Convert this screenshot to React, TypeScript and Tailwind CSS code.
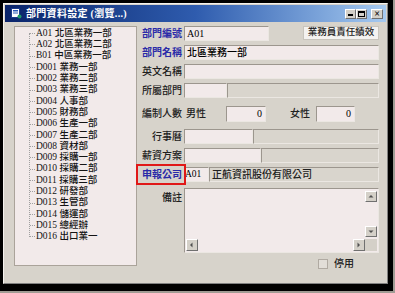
import React from 'react';

const TREE = [
  'A01 北區業務一部',
  'A02 北區業務二部',
  'B01 中區業務一部',
  'D001 業務一部',
  'D002 業務二部',
  'D003 業務三部',
  'D004 人事部',
  'D005 財務部',
  'D006 生產一部',
  'D007 生產二部',
  'D008 資材部',
  'D009 採購一部',
  'D010 採購二部',
  'D011 採購三部',
  'D012 研發部',
  'D013 生管部',
  'D014 儲運部',
  'D015 總經辦',
  'D016 出口業一',
];

const FONT = { fontFamily: '"Liberation Serif", "Noto Sans CJK TC", serif' };

const sunken = 'border border-t-[#9c968e] border-l-[#9c968e] border-b-[#ebe7e2] border-r-[#ebe7e2]';
const edit = `${sunken} bg-[#f2eaea]`;
const readonly = `${sunken} bg-[#d9d5cd]`;
const raised = 'border border-t-white border-l-white border-b-[#707070] border-r-[#707070] bg-[#d4d0c8]';

const Label = ({ children, blue }: { children: React.ReactNode; blue?: boolean }) => (
  <div className={`w-[47px] shrink-0 pr-[2px] text-right text-[10px] leading-[15px] ${blue ? 'text-[#2a2aa8] font-bold' : 'text-[#202020] font-medium'}`}>
    {children}
  </div>
);

const TitleIcon = () => (
  <svg width="11" height="11" viewBox="0 0 11 11">
    <rect x="0.5" y="0.5" width="8" height="9" fill="#fff" stroke="#1a3a8a" />
    <rect x="2" y="2" width="5" height="1.5" fill="#2a5ab8" />
    <rect x="2" y="4.5" width="5" height="1" fill="#2a5ab8" />
    <circle cx="8.5" cy="8.5" r="2" fill="#1e9a6a" />
  </svg>
);

const Arrow = ({ dir }: { dir: 'up' | 'down' | 'left' | 'right' }) => {
  const pts = {
    up: '1.5,4.5 4,2 6.5,4.5',
    down: '1.5,2.5 4,5 6.5,2.5',
    left: '4.5,1.5 2,4 4.5,6.5',
    right: '2.5,1.5 5,4 2.5,6.5',
  }[dir];
  return (
    <svg width="8" height="8" viewBox="0 0 8 8">
      <polygon points={pts} fill="#505050" />
    </svg>
  );
};

export default function App() {
  return (
    <div className="w-[395px] h-[293px] bg-[#a09c94] overflow-hidden" style={FONT}>
      <div className="w-[393px] h-[291px] bg-black pl-[3px] pt-[3px] pr-[5px] pb-[7px]">
        <div className="w-full h-full bg-[#d7d3cb] border border-t-[#f4f2ee] border-l-[#f4f2ee] border-b-[#808080] border-r-[#808080] p-[1px] flex flex-col">
          {/* title bar */}
          <div className="h-[17px] shrink-0 flex items-center bg-gradient-to-r from-[#0a246a] via-[#2f5cae] to-[#a6caf0] pl-[6px] pr-[3px]">
            <TitleIcon />
            <span className="ml-[4px] text-white font-bold text-[10px] leading-none tracking-[0.3px]">部門資料設定 (瀏覽...)</span>
            <div className="ml-auto flex items-center">
              <div className={`${raised} w-[11px] h-[10px] flex items-end justify-center pb-[2px]`}>
                <div className="w-[5px] h-[2px] bg-black" />
              </div>
              <div className={`${raised} w-[11px] h-[10px] flex items-center justify-center`}>
                <div className="w-[7px] h-[6px] border border-t-2 border-black" />
              </div>
              <div className={`${raised} ml-[4px] w-[12px] h-[10px] flex items-center justify-center text-[10px] font-bold leading-none text-black`}>
                ×
              </div>
            </div>
          </div>

          {/* body */}
          <div className="flex flex-1 pl-[9px] pt-[4px]">
            {/* tree */}
            <div className="w-[123px] h-[240px] shrink-0 bg-[#f2eaea] border border-[#aaa39a] pt-[1px] relative">
              <div className="absolute left-[14px] top-[6px] h-[204px] border-l border-dotted border-[#a0a0a0]" />
              {TREE.map((t) => (
                <div key={t} className="flex items-center h-[11.3px]">
                  <div className="ml-[15px] w-[5px] border-t border-dotted border-[#a0a0a0]" />
                  <span className="ml-[1px] text-[9.5px] leading-none whitespace-nowrap font-medium text-[#141414]">{t}</span>
                </div>
              ))}
            </div>

            {/* form */}
            <div className="flex flex-col gap-[4px] w-[242px]">
              <div className="flex h-[15px]">
                <Label blue>部門編號</Label>
                <div className={`${edit} w-[85px] h-[15px] pl-[2px] text-[10px] leading-[13px]`}>A01</div>
                <div className="ml-auto w-[76px] h-[14px] bg-[#f4f2f0] border border-[#c8c4bc] flex items-center justify-center text-[9.5px] leading-none font-medium text-[#202020]">
                  業務員責任績效
                </div>
              </div>
              <div className="flex h-[15px]">
                <Label blue>部門名稱</Label>
                <div className={`${edit} flex-1 h-[15px] pl-[2px] text-[10px] leading-[13px] font-medium`}>北區業務一部</div>
              </div>
              <div className="flex h-[15px]">
                <Label>英文名稱</Label>
                <div className={`${edit} flex-1 h-[15px]`} />
              </div>
              <div className="flex h-[15px]">
                <Label>所屬部門</Label>
                <div className={`${edit} w-[43px] h-[15px]`} />
                <div className={`${readonly} flex-1 h-[15px]`} />
              </div>
              <div className="flex h-[23px] items-center">
                <Label>編制人數</Label>
                <div className="flex-1 h-[23px] flex items-center">
                  <span className="ml-[2px] w-[40px] text-[10px] leading-none font-medium text-[#202020]">男性</span>
                  <div className={`${edit} w-[40px] h-[16px] pr-[3px] text-right text-[10px] leading-[14px]`}>0</div>
                  <span className="ml-[24px] w-[26px] text-[10px] leading-none font-medium text-[#202020]">女性</span>
                  <div className={`${edit} w-[39px] h-[16px] pr-[3px] text-right text-[10px] leading-[14px]`}>0</div>
                </div>
              </div>
              <div className="flex h-[15px]">
                <Label>行事曆</Label>
                <div className={`${edit} w-[69px] h-[15px]`} />
                <div className={`${readonly} flex-1 h-[15px]`} />
              </div>
              <div className="flex h-[15px]">
                <Label>薪資方案</Label>
                <div className={`${edit} w-[77px] h-[15px]`} />
                <div className={`${readonly} flex-1 h-[15px]`} />
              </div>
              <div className="flex h-[15px] relative">
                <Label blue>申報公司</Label>
                <div className="absolute left-[-1px] top-[-3px] w-[50px] h-[21px] border-[2.5px] border-[#e01818]" />
                <div className={`${edit} w-[25px] h-[15px] text-[9.5px] leading-[13px] overflow-hidden`}>A01</div>
                <div className={`${readonly} flex-1 h-[15px] pl-[2px] text-[10px] leading-[13px] font-medium text-[#202020]`}>正航資訊股份有限公司</div>
              </div>
              <div className="flex h-[65px] mt-[2px]">
                <Label>
                  <span className="block mt-[2px]">備註</span>
                </Label>
                <div className={`${edit} flex-1 h-[65px] relative`}>
                  <div className="absolute right-[1px] top-[2px] w-[12px] h-[46px] flex flex-col justify-between">
                    <div className={`${raised} h-[11px] flex items-center justify-center`}>
                      <Arrow dir="up" />
                    </div>
                    <div className={`${raised} h-[11px] flex items-center justify-center`}>
                      <Arrow dir="down" />
                    </div>
                  </div>
                  <div className="absolute left-[1px] right-[1px] bottom-[1px] h-[12px] flex">
                    <div className={`${raised} w-[12px] h-[12px] flex items-center justify-center`}>
                      <Arrow dir="left" />
                    </div>
                    <div className="flex-1" />
                    <div className={`${raised} w-[12px] h-[12px] flex items-center justify-center`}>
                      <Arrow dir="right" />
                    </div>
                    <div className="w-[12px] h-[12px] bg-[#d4d0c8]" />
                  </div>
                </div>
              </div>
              <div className="flex items-center mt-[2px] pl-[181px]">
                <div className="w-[10px] h-[10px] bg-[#e2ded8] border border-[#b0aaa2]" />
                <span className="ml-[6px] text-[10px] leading-none font-medium text-[#202020]">停用</span>
              </div>
            </div>
          </div>
        </div>
      </div>
    </div>
  );
}
